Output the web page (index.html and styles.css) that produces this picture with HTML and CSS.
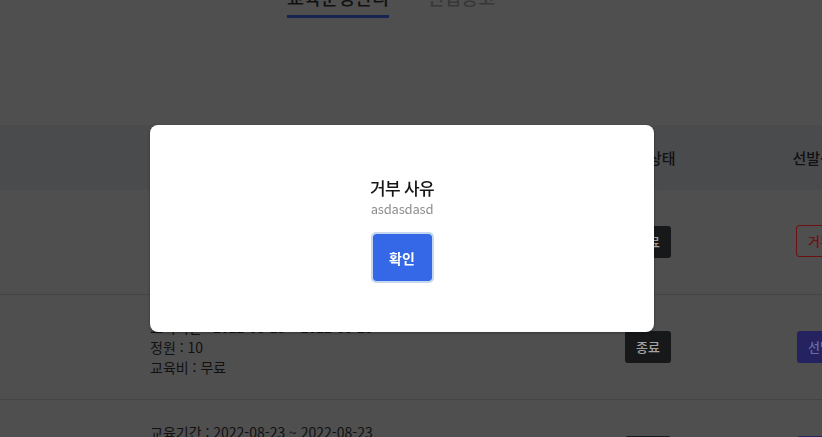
FILE: index.html
```html
<!DOCTYPE html>
<html lang="ko">
<head>
    <meta charset="UTF-8">
    <meta name="viewport" content="width=device-width, initial-scale=1.0">
    <title>교육운영관리</title>
    <link rel="stylesheet" href="styles.css">
</head>
<body>
    <div class="page">
        <div class="tabs">
            <div class="tab active">교육운영관리</div>
            <div class="tab">신입공고</div>
        </div>

        <div class="table">
            <div class="row head">
                <div class="cell"></div>
                <div class="cell info">교육명</div>
                <div class="cell center">진행상태</div>
                <div class="cell center">선발상태</div>
            </div>
            <div class="row">
                <div class="cell"></div>
                <div class="cell info">
                    <p>교육기간 : 2022-08-23 ~ 2022-08-23</p>
                    <p>정원 : 10</p>
                    <p>교육비 : 무료</p>
                </div>
                <div class="cell center"><span class="btn dark">종료</span></div>
                <div class="cell center"><span class="btn reject">거부</span></div>
            </div>
            <div class="row">
                <div class="cell"></div>
                <div class="cell info">
                    <p>교육기간 : 2022-08-23 ~ 2022-08-23</p>
                    <p>정원 : 10</p>
                    <p>교육비 : 무료</p>
                </div>
                <div class="cell center"><span class="btn dark">종료</span></div>
                <div class="cell center"><span class="btn pick">선발</span></div>
            </div>
            <div class="row">
                <div class="cell"></div>
                <div class="cell info">
                    <p>교육기간 : 2022-08-23 ~ 2022-08-23</p>
                    <p>정원 : 10</p>
                    <p>교육비 : 무료</p>
                </div>
                <div class="cell center"><span class="btn dark">종료</span></div>
                <div class="cell center"><span class="btn pick">선발</span></div>
            </div>
        </div>
    </div>

    <div class="overlay">
        <div class="modal">
            <h3>거부 사유</h3>
            <p class="reason">asdasdasd</p>
            <button class="confirm">확인</button>
        </div>
    </div>
</body>
</html>
```

FILE: styles.css
```css
body {
    margin: 0;
    font-family: "Noto Sans CJK KR", "Noto Sans", sans-serif;
    background-color: #4f4f4f;
    color: #111;
    overflow: hidden;
}
.page {
    width: 960px;
}
.tabs {
    display: flex;
    gap: 38px;
    padding-left: 287px;
    margin-top: -15px;
}
.tab {
    font-size: 18.5px;
    line-height: 24px;
    font-weight: 500;
    color: #383838;
    padding-bottom: 6px;
    border-bottom: 3px solid transparent;
}
.tab.active {
    color: #111;
    border-bottom-color: #16244f;
}
.table {
    margin-top: 107px;
}
.row {
    display: grid;
    grid-template-columns: 150px 450px 96px 248px;
    height: 104px;
    border-bottom: 1px solid #444;
    align-items: center;
    font-size: 14px;
}
.row.head {
    height: 65px;
    background: #4a4b4d;
    border-bottom: none;
    font-size: 15px;
    font-weight: 500;
}
.cell.center {
    text-align: center;
}
.info p {
    margin: 0;
    line-height: 20px;
}
.btn {
    display: inline-block;
    box-sizing: border-box;
    height: 32px;
    line-height: 32px;
    padding: 0 11px;
    font-size: 13px;
    font-weight: 500;
    border-radius: 3px;
}
.btn.dark {
    background: #17181a;
    color: #a3a3a3;
}
.btn.reject {
    border: 1px solid #6d1010;
    line-height: 30px;
    margin-top: -2px;
    color: #6d1010;
}
.btn.pick {
    background: #24225f;
    color: #6c6aa0;
}
.overlay {
    position: fixed;
    inset: 0;
    padding: 125px 0 0 150px;
}
.modal {
    width: 504px;
    height: 207px;
    box-sizing: border-box;
    background: #fff;
    border-radius: 8px;
    box-shadow: 0 1px 3px rgba(0, 0, 0, 0.35);
    padding-top: 51px;
    text-align: center;
}
.modal h3 {
    margin: 0;
    font-size: 17px;
    line-height: 23px;
    font-weight: 500;
    color: #161616;
    letter-spacing: -0.7px;
}
.reason {
    margin: 0;
    font-size: 13px;
    line-height: 20px;
    color: #8e8e8e;
    letter-spacing: -0.2px;
}
.confirm {
    margin-top: 13px;
    width: 63px;
    height: 51px;
    border: 2px solid #c6d8ef;
    border-radius: 5px;
    background: #3468e6;
    background-clip: padding-box;
    color: #fff;
    font-family: inherit;
    font-size: 14px;
    font-weight: 700;
    cursor: pointer;
}
```
